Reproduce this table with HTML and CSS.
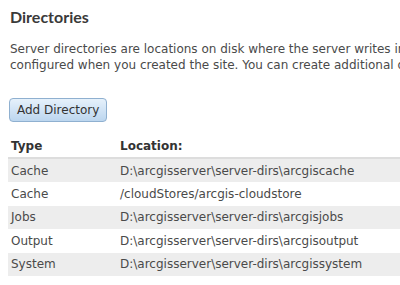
FILE: index.html
```html
<!DOCTYPE html>
<html>
<head>
<meta charset="utf-8">
<link rel="stylesheet" href="styles.css">
</head>
<body>
<div class="page">
  <h2 class="title">Directories</h2>
  <p class="desc">Server directories are locations on disk where the server writes information. The default directories were<br>configured when you created the site. You can create additional directories as needed.</p>
  <div class="actions"><button class="btn">Add Directory</button></div>
  <table class="dirs">
    <thead>
      <tr><th class="c-type">Type</th><th class="c-loc">Location:</th></tr>
    </thead>
    <tbody>
      <tr class="odd"><td>Cache</td><td>D:\arcgisserver\server-dirs\arcgiscache</td></tr>
      <tr><td>Cache</td><td>/cloudStores/arcgis-cloudstore</td></tr>
      <tr class="odd"><td>Jobs</td><td>D:\arcgisserver\server-dirs\arcgisjobs</td></tr>
      <tr><td>Output</td><td>D:\arcgisserver\server-dirs\arcgisoutput</td></tr>
      <tr class="odd"><td>System</td><td>D:\arcgisserver\server-dirs\arcgissystem</td></tr>
    </tbody>
  </table>
</div>
</body>
</html>
```
FILE: styles.css
```css
html, body {
  margin: 0;
  padding: 0;
  background: #fff;
  overflow: hidden;
}
body {
  font-family: "DejaVu Sans", Verdana, sans-serif;
  color: #4a4a4a;
}
.page {
  width: 900px;
  padding: 8px 0 0 8px;
}
.title {
  margin: 0 0 0 2px;
  font-family: Lato, "DejaVu Sans", sans-serif;
  font-size: 16px;
  font-weight: bold;
  color: #3a3a3a;
  line-height: 18px;
}
.desc {
  margin: 15px 0 0 2px;
  font-size: 12px;
  line-height: 16px;
  color: #4a4a4a;
  white-space: nowrap;
}
.actions {
  margin: 25px 0 0 1px;
}
.btn {
  font-family: inherit;
  font-size: 12px;
  color: #333;
  height: 24px;
  padding: 0 7px;
  border: 1px solid #8fb0d0;
  border-radius: 4px;
  background: linear-gradient(#e6f1fb, #bcd6ef);
}
.dirs {
  margin-top: 15px;
  border-collapse: collapse;
  width: 640px;
  font-size: 12px;
}
.dirs th {
  text-align: left;
  font-weight: bold;
  font-size: 12px;
  color: #333;
  padding: 0 3px 2px 3px;
  height: 18px;
  border-bottom: 2px solid #ddd;
}
.dirs .c-type { width: 103px; }
.dirs td {
  padding: 0 3px;
  height: 23.4px;
  color: #4a4a4a;
}
.dirs tr.odd td {
  background: #ededed;
}
```
